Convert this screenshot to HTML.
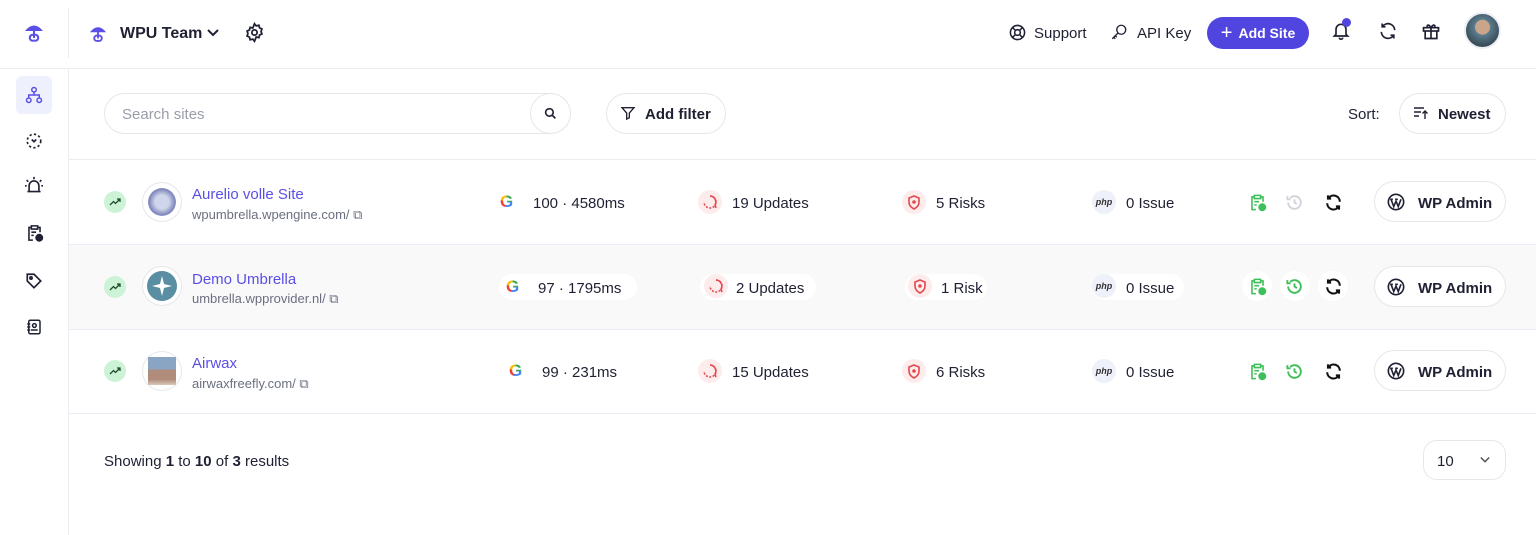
<!DOCTYPE html>
<html><head><meta charset="utf-8"><style>
*{box-sizing:border-box;margin:0;padding:0}
body{width:1536px;height:535px;overflow:hidden;background:#fff;font-family:"Liberation Sans",sans-serif;color:#1f2133;position:relative}
.a{position:absolute}
.t{font-size:15px;white-space:nowrap;transform:translateY(1px)}
.pill{position:absolute;border:1px solid #e5e7eb;border-radius:22px;background:#fff}
.name{font-size:15px;color:#5b4fe6}
.url{font-size:13px;color:#6b6f80}
.g{position:absolute;font-size:17px;font-weight:700;background:conic-gradient(from 200deg,#ea4335 0 25%,#fbbc05 25% 45%,#34a853 45% 70%,#4285f4 70%);-webkit-background-clip:text;background-clip:text;color:transparent}
</style></head><body>
<div class="a" style="left:0;top:68px;width:1536px;height:1px;background:#ececf0"></div>
<div class="a" style="left:68px;top:8px;width:1px;height:50px;background:#ececf0"></div>
<div class="a" style="left:68px;top:69px;width:1px;height:466px;background:#ececf0"></div>
<svg class="a" style="left:24px;top:22px" width="20" height="22" viewBox="0 0 20 22"><path d="M1 9 Q10 -2 19 9 Z" fill="#5b4fe6"/><path d="M10 8 V16 M10 13 a3 3 0 1 1 0 5.5 a3 3 0 1 1 0 -5.5" stroke="#5b4fe6" stroke-width="2" fill="none"/></svg>
<svg class="a" style="left:89px;top:24px" width="18" height="20" viewBox="0 0 20 22"><path d="M1 9 Q10 -2 19 9 Z" fill="#5b4fe6"/><path d="M10 8 V16 M10 13 a3 3 0 1 1 0 5.5 a3 3 0 1 1 0 -5.5" stroke="#5b4fe6" stroke-width="2" fill="none"/></svg>
<div class="a t" style="left:120px;top:24px;font-size:16px;font-weight:600">WPU Team</div>
<svg class="a" style="left:206px;top:27px" width="14" height="12" viewBox="0 0 14 12"><path d="M2 3 L7 8 L12 3" stroke="#1f2133" stroke-width="2" fill="none"/></svg>
<svg class="a" style="left:244px;top:22px" width="21" height="21" viewBox="0 0 24 24" fill="none" stroke="#1f2133" stroke-width="2"><circle cx="12" cy="12" r="3"/><path d="M12 2l2 2.5 3-.8.8 3 2.7 1.3-1 2.8 1 2.8-2.7 1.3-.8 3-3-.8L12 22l-2-2.5-3 .8-.8-3L3.5 16l1-2.8-1-2.8 2.7-1.3.8-3 3 .8z"/></svg>

<svg class="a" style="left:1009px;top:24px" width="17" height="17" viewBox="0 0 24 24" fill="none" stroke="#1f2133" stroke-width="2.2"><circle cx="12" cy="12" r="10"/><circle cx="12" cy="12" r="4"/><path d="M5 5l4 4M15 15l4 4M19 5l-4 4M9 15l-4 4"/></svg>
<div class="a t" style="left:1034px;top:24px">Support</div>
<svg class="a" style="left:1110px;top:23px" width="18" height="18" viewBox="0 0 24 24" fill="none" stroke="#1f2133" stroke-width="1.8"><circle cx="15" cy="9" r="6"/><path d="M10.5 13.5 L3 21 M5 19l2 2M7 17l2 2"/></svg>
<div class="a t" style="left:1137px;top:24px">API Key</div>
<div class="a" style="left:1207px;top:17px;width:102px;height:32px;border-radius:16px;background:#5145e0;color:#fff;font-size:14px;font-weight:600;display:flex;align-items:center;justify-content:center;gap:6px"><span style="font-size:20px;font-weight:300;line-height:1">+</span>Add Site</div>
<svg class="a" style="left:1331px;top:21px" width="20" height="20" viewBox="0 0 24 24" fill="none" stroke="#1f2133" stroke-width="2"><path d="M6 16V10a6 6 0 0 1 12 0v6l2 2H4z M10 20a2 2 0 0 0 4 0"/></svg>
<div class="a" style="left:1342px;top:18px;width:9px;height:9px;border-radius:50%;background:#5145e0"></div>
<svg class="a" style="left:1378px;top:21px" width="20" height="20" viewBox="0 0 24 24" fill="none" stroke="#1f2133" stroke-width="2"><path d="M20 11a8 8 0 0 0-14.5-4.5M4 13a8 8 0 0 0 14.5 4.5M5 3v4h4M19 21v-4h-4"/></svg>
<svg class="a" style="left:1421px;top:21px" width="20" height="20" viewBox="0 0 24 24" fill="none" stroke="#1f2133" stroke-width="2"><rect x="3" y="8" width="18" height="4"/><path d="M5 12v9h14v-9M12 8v13M12 8C9 3 6 5 8 8M12 8c3-5 6-3 4 0"/></svg>
<div class="a" style="left:1464px;top:12px;width:37px;height:37px;border-radius:50%;border:2px solid #eceef3;background:radial-gradient(circle at 50% 40%,#c9a58a 0 28%,#5c7d8f 30%,#3b4e5a 70%)"></div>

<div class="a" style="left:16px;top:76px;width:36px;height:38px;border-radius:6px;background:#eef0fd"></div>
<svg class="a" style="left:25px;top:86px" width="18" height="18" viewBox="0 0 24 24" fill="none" stroke="#5b4fe6" stroke-width="2"><circle cx="12" cy="5" r="3"/><circle cx="5" cy="19" r="3"/><circle cx="19" cy="19" r="3"/><path d="M12 8v4M5 16v-4h14v4"/></svg>
<svg class="a" style="left:25px;top:132px" width="18" height="18" viewBox="0 0 24 24" fill="none" stroke="#1f2133" stroke-width="2.2" stroke-dasharray="3 3"><circle cx="12" cy="12" r="9"/><path d="M9 10l3 3 3-3" stroke-dasharray="none"/></svg>
<svg class="a" style="left:24px;top:176px" width="20" height="18" viewBox="0 0 24 22" fill="none" stroke="#1f2133" stroke-width="2"><path d="M6 18v-6a6 6 0 0 1 12 0v6M4 19h16M12 1v3M3 5l2 2M21 5l-2 2M1 12h2M21 12h2"/></svg>
<svg class="a" style="left:25px;top:223px" width="19" height="20" viewBox="0 0 24 24" fill="none" stroke="#1f2133" stroke-width="2"><path d="M10 21H5V5h3M16 5h3v6M8 3h8v4H8z M8 11h6M8 15h3"/><circle cx="18" cy="18" r="4" fill="#1f2133"/></svg>
<svg class="a" style="left:25px;top:272px" width="18" height="18" viewBox="0 0 24 24" fill="none" stroke="#1f2133" stroke-width="2.2"><path d="M3 3h9l9 9-9 9-9-9z"/><circle cx="8" cy="8" r="1.5"/></svg>
<svg class="a" style="left:25px;top:318px" width="18" height="18" viewBox="0 0 24 24" fill="none" stroke="#1f2133" stroke-width="2"><rect x="5" y="3" width="15" height="18" rx="2"/><circle cx="12.5" cy="10" r="2.5"/><path d="M8 16h9M3 8h4M3 12h4M3 16h4"/></svg>

<div class="pill" style="left:104px;top:93px;width:467px;height:41px"></div>
<div class="a t" style="left:122px;top:105px;color:#9a9daa">Search sites</div>
<div class="pill" style="left:530px;top:93px;width:41px;height:41px;border-radius:50%"></div>
<svg class="a" style="left:544px;top:107px" width="13" height="13" viewBox="0 0 24 24" fill="none" stroke="#1f2133" stroke-width="3"><circle cx="10" cy="10" r="7"/><path d="M15 15l6 6"/></svg>
<div class="pill" style="left:606px;top:93px;width:120px;height:41px"></div>
<svg class="a" style="left:620px;top:105px" width="16" height="16" viewBox="0 0 24 24" fill="none" stroke="#1f2133" stroke-width="2"><path d="M3 4h18l-7 8v7l-4 2v-9z"/></svg>
<div class="a t" style="left:645px;top:105px;font-weight:600">Add filter</div>
<div class="a t" style="left:1348px;top:105px">Sort:</div>
<div class="pill" style="left:1399px;top:93px;width:107px;height:41px"></div>
<svg class="a" style="left:1413px;top:106px" width="16" height="14" viewBox="0 0 16 14" fill="none" stroke="#1f2133" stroke-width="1.4"><path d="M1 2h10M1 6h7M1 10h5M12 13V5M9.5 7.5L12 5l2.5 2.5"/></svg>
<div class="a t" style="left:1438px;top:105px;font-weight:600">Newest</div>
<div class="a" style="left:69px;top:159px;width:1467px;height:1px;background:#ececf0"></div>

<div class="a" style="left:69px;top:244px;width:1467px;height:1px;background:#ececf6"></div>
<div class="a" style="left:69px;top:245px;width:1467px;height:84px;background:#f9f9fa"></div>
<div class="a" style="left:69px;top:329px;width:1467px;height:1px;background:#ececf6"></div>
<div class="a" style="left:69px;top:413px;width:1467px;height:1px;background:#ececf6"></div>

<div class="a" style="left:104px;top:191px;width:22px;height:22px;border-radius:50%;background:#cdf3d6"></div>
<svg class="a" style="left:109px;top:197px" width="12" height="10" viewBox="0 0 12 10" fill="none" stroke="#1f4d2a" stroke-width="1.3"><path d="M1 8l3.5-3.5 2 2L11 2M8 2h3v3"/></svg>
<div class="a" style="left:142px;top:182px;width:40px;height:40px;border-radius:50%;border:1px solid #e5e7eb;background:#fff"></div>
<div class="a" style="left:148px;top:188px;width:28px;height:28px;border-radius:50%;background:radial-gradient(circle,#cfd5ea 0 35%,#7f88bd 65%,#d0d4e8 90%)"></div>
<div class="a name" style="left:192px;top:186px">Aurelio volle Site</div>
<div class="a url" style="left:192px;top:207px">wpumbrella.wpengine.com/ ⧉</div>

<div class="a" style="left:104px;top:276px;width:22px;height:22px;border-radius:50%;background:#cdf3d6"></div>
<svg class="a" style="left:109px;top:282px" width="12" height="10" viewBox="0 0 12 10" fill="none" stroke="#1f4d2a" stroke-width="1.3"><path d="M1 8l3.5-3.5 2 2L11 2M8 2h3v3"/></svg>
<div class="a" style="left:142px;top:266px;width:40px;height:40px;border-radius:50%;border:1px solid #e5e7eb;background:#fff"></div>
<div class="a" style="left:147px;top:271px;width:30px;height:30px;border-radius:50%;background:#5a8ea3"></div>
<svg class="a" style="left:151px;top:275px" width="22" height="22" viewBox="0 0 22 22"><path d="M11 1 L13 9 L21 11 L13 13 L11 21 L9 13 L1 11 L9 9Z" fill="#fff"/></svg>
<div class="a name" style="left:192px;top:271px">Demo Umbrella</div>
<div class="a url" style="left:192px;top:291px">umbrella.wpprovider.nl/ ⧉</div>

<div class="a" style="left:104px;top:360px;width:22px;height:22px;border-radius:50%;background:#cdf3d6"></div>
<svg class="a" style="left:109px;top:366px" width="12" height="10" viewBox="0 0 12 10" fill="none" stroke="#1f4d2a" stroke-width="1.3"><path d="M1 8l3.5-3.5 2 2L11 2M8 2h3v3"/></svg>
<div class="a" style="left:142px;top:351px;width:40px;height:40px;border-radius:50%;border:1px solid #e5e7eb;background:#fff"></div>
<div class="a" style="left:148px;top:357px;width:28px;height:28px;background:linear-gradient(#8aa4c4 0 45%,#b08c7a 45% 80%,#d9c8b8)"></div>
<div class="a name" style="left:192px;top:355px">Airwax</div>
<div class="a url" style="left:192px;top:376px">airwaxfreefly.com/ ⧉</div>

<div class="a" style="left:499px;top:274px;width:138px;height:26px;background:#fff;border-radius:13px"></div>
<div class="a" style="left:700px;top:274px;width:116px;height:26px;background:#fff;border-radius:13px"></div>
<div class="a" style="left:905px;top:274px;width:82px;height:26px;background:#fff;border-radius:13px"></div>
<div class="a" style="left:1092px;top:274px;width:92px;height:26px;background:#fff;border-radius:13px"></div>

<div class="g" style="left:500px;top:192px">G</div>
<div class="a t" style="left:533px;top:194px">100 · 4580ms</div>
<div class="g" style="left:506px;top:277px">G</div>
<div class="a t" style="left:538px;top:279px">97 · 1795ms</div>
<div class="g" style="left:509px;top:361px">G</div>
<div class="a t" style="left:542px;top:363px">99 · 231ms</div>

<div class="a" style="left:698px;top:190px;width:24px;height:24px;border-radius:50%;background:#fdecec"></div>
<div class="a" style="left:704px;top:274px;width:24px;height:24px;border-radius:50%;background:#fdecec"></div>
<div class="a" style="left:698px;top:359px;width:24px;height:24px;border-radius:50%;background:#fdecec"></div>
<svg class="a" style="left:703px;top:195px" width="14" height="14" viewBox="0 0 14 14" fill="none" stroke="#e5484d" stroke-width="1.6"><path d="M7 1a6 6 0 1 1-6 6" stroke-dasharray="2 1.5"/><path d="M7 1a6 6 0 0 1 5 9l1 3"/></svg>
<svg class="a" style="left:709px;top:279px" width="14" height="14" viewBox="0 0 14 14" fill="none" stroke="#e5484d" stroke-width="1.6"><path d="M7 1a6 6 0 1 1-6 6" stroke-dasharray="2 1.5"/><path d="M7 1a6 6 0 0 1 5 9l1 3"/></svg>
<svg class="a" style="left:703px;top:364px" width="14" height="14" viewBox="0 0 14 14" fill="none" stroke="#e5484d" stroke-width="1.6"><path d="M7 1a6 6 0 1 1-6 6" stroke-dasharray="2 1.5"/><path d="M7 1a6 6 0 0 1 5 9l1 3"/></svg>
<div class="a t" style="left:732px;top:194px">19 Updates</div>
<div class="a t" style="left:736px;top:279px">2 Updates</div>
<div class="a t" style="left:732px;top:363px">15 Updates</div>

<div class="a" style="left:902px;top:190px;width:24px;height:24px;border-radius:50%;background:#fdecec"></div>
<div class="a" style="left:908px;top:274px;width:24px;height:24px;border-radius:50%;background:#fdecec"></div>
<div class="a" style="left:902px;top:359px;width:24px;height:24px;border-radius:50%;background:#fdecec"></div>
<svg class="a" style="left:907px;top:195px" width="14" height="15" viewBox="0 0 14 15" fill="none" stroke="#e5484d" stroke-width="1.6"><path d="M7 1l5 2v4c0 4-3 6-5 7-2-1-5-3-5-7V3z"/><circle cx="7" cy="7" r="1" fill="#e5484d"/></svg>
<svg class="a" style="left:913px;top:279px" width="14" height="15" viewBox="0 0 14 15" fill="none" stroke="#e5484d" stroke-width="1.6"><path d="M7 1l5 2v4c0 4-3 6-5 7-2-1-5-3-5-7V3z"/><circle cx="7" cy="7" r="1" fill="#e5484d"/></svg>
<svg class="a" style="left:907px;top:364px" width="14" height="15" viewBox="0 0 14 15" fill="none" stroke="#e5484d" stroke-width="1.6"><path d="M7 1l5 2v4c0 4-3 6-5 7-2-1-5-3-5-7V3z"/><circle cx="7" cy="7" r="1" fill="#e5484d"/></svg>
<div class="a t" style="left:936px;top:194px">5 Risks</div>
<div class="a t" style="left:941px;top:279px">1 Risk</div>
<div class="a t" style="left:936px;top:363px">6 Risks</div>

<div class="a" style="left:1092px;top:190px;width:24px;height:24px;border-radius:50%;background:#eef0fa;font-size:9px;font-style:italic;font-weight:700;display:flex;align-items:center;justify-content:center;color:#333">php</div>
<div class="a" style="left:1092px;top:274px;width:24px;height:24px;border-radius:50%;background:#eef0fa;font-size:9px;font-style:italic;font-weight:700;display:flex;align-items:center;justify-content:center;color:#333">php</div>
<div class="a" style="left:1092px;top:359px;width:24px;height:24px;border-radius:50%;background:#eef0fa;font-size:9px;font-style:italic;font-weight:700;display:flex;align-items:center;justify-content:center;color:#333">php</div>
<div class="a t" style="left:1126px;top:194px">0 Issue</div>
<div class="a t" style="left:1126px;top:279px">0 Issue</div>
<div class="a t" style="left:1126px;top:363px">0 Issue</div>

<div class="a" style="left:1242px;top:271px;width:30px;height:30px;border-radius:50%;background:#fff"></div>
<div class="a" style="left:1280px;top:271px;width:30px;height:30px;border-radius:50%;background:#fff"></div>
<div class="a" style="left:1318px;top:271px;width:30px;height:30px;border-radius:50%;background:#fff"></div>
<svg class="a" style="left:1248px;top:193px" width="19" height="19" viewBox="0 0 24 24" fill="none" stroke="#3fbf5a" stroke-width="2"><path d="M10 21H5V5h3M16 5h3v6M8 3h8v4H8z M8 11h6M8 15h3"/><circle cx="18" cy="18" r="4" fill="#3fbf5a"/></svg>
<svg class="a" style="left:1248px;top:277px" width="19" height="19" viewBox="0 0 24 24" fill="none" stroke="#3fbf5a" stroke-width="2"><path d="M10 21H5V5h3M16 5h3v6M8 3h8v4H8z M8 11h6M8 15h3"/><circle cx="18" cy="18" r="4" fill="#3fbf5a"/></svg>
<svg class="a" style="left:1248px;top:362px" width="19" height="19" viewBox="0 0 24 24" fill="none" stroke="#3fbf5a" stroke-width="2"><path d="M10 21H5V5h3M16 5h3v6M8 3h8v4H8z M8 11h6M8 15h3"/><circle cx="18" cy="18" r="4" fill="#3fbf5a"/></svg>
<svg class="a" style="left:1285px;top:193px" width="19" height="19" viewBox="0 0 24 24" fill="none" stroke="#d1d4db" stroke-width="2.4"><path d="M4 12a8 8 0 1 0 2.5-5.8M3 4v4h4M12 8v4l3 2"/></svg>
<svg class="a" style="left:1285px;top:277px" width="19" height="19" viewBox="0 0 24 24" fill="none" stroke="#3fbf5a" stroke-width="2.4"><path d="M4 12a8 8 0 1 0 2.5-5.8M3 4v4h4M12 8v4l3 2"/></svg>
<svg class="a" style="left:1285px;top:362px" width="19" height="19" viewBox="0 0 24 24" fill="none" stroke="#3fbf5a" stroke-width="2.4"><path d="M4 12a8 8 0 1 0 2.5-5.8M3 4v4h4M12 8v4l3 2"/></svg>
<svg class="a" style="left:1324px;top:193px" width="19" height="19" viewBox="0 0 24 24" fill="none" stroke="#111" stroke-width="2.6"><path d="M20 11a8 8 0 0 0-14.5-4.5M4 13a8 8 0 0 0 14.5 4.5M5 3v4h4M19 21v-4h-4"/></svg>
<svg class="a" style="left:1324px;top:277px" width="19" height="19" viewBox="0 0 24 24" fill="none" stroke="#111" stroke-width="2.6"><path d="M20 11a8 8 0 0 0-14.5-4.5M4 13a8 8 0 0 0 14.5 4.5M5 3v4h4M19 21v-4h-4"/></svg>
<svg class="a" style="left:1324px;top:362px" width="19" height="19" viewBox="0 0 24 24" fill="none" stroke="#111" stroke-width="2.6"><path d="M20 11a8 8 0 0 0-14.5-4.5M4 13a8 8 0 0 0 14.5 4.5M5 3v4h4M19 21v-4h-4"/></svg>

<div class="pill" style="left:1374px;top:181px;width:132px;height:41px"></div>
<div class="pill" style="left:1374px;top:266px;width:132px;height:41px"></div>
<div class="pill" style="left:1374px;top:350px;width:132px;height:41px"></div>
<svg class="a" style="left:1387px;top:193px" width="18" height="18" viewBox="0 0 20 20" fill="none" stroke="#1f2133" stroke-width="1.8"><circle cx="10" cy="10" r="8.5"/><path d="M4.5 7l3 8 2.5-6 2.5 6 3-8M3.5 7h3M9 7h3"/></svg>
<svg class="a" style="left:1387px;top:278px" width="18" height="18" viewBox="0 0 20 20" fill="none" stroke="#1f2133" stroke-width="1.8"><circle cx="10" cy="10" r="8.5"/><path d="M4.5 7l3 8 2.5-6 2.5 6 3-8M3.5 7h3M9 7h3"/></svg>
<svg class="a" style="left:1387px;top:362px" width="18" height="18" viewBox="0 0 20 20" fill="none" stroke="#1f2133" stroke-width="1.8"><circle cx="10" cy="10" r="8.5"/><path d="M4.5 7l3 8 2.5-6 2.5 6 3-8M3.5 7h3M9 7h3"/></svg>
<div class="a t" style="left:1418px;top:194px;font-weight:600">WP Admin</div>
<div class="a t" style="left:1418px;top:279px;font-weight:600">WP Admin</div>
<div class="a t" style="left:1418px;top:363px;font-weight:600">WP Admin</div>

<div class="a t" style="left:104px;top:452px">Showing <b>1</b> to <b>10</b> of <b>3</b> results</div>
<div class="pill" style="left:1423px;top:440px;width:83px;height:40px;border-radius:14px"></div>
<div class="a t" style="left:1437px;top:452px">10</div>
<svg class="a" style="left:1479px;top:455px" width="12" height="10" viewBox="0 0 14 12"><path d="M2 3 L7 8 L12 3" stroke="#555" stroke-width="1.8" fill="none"/></svg>
</body></html>
